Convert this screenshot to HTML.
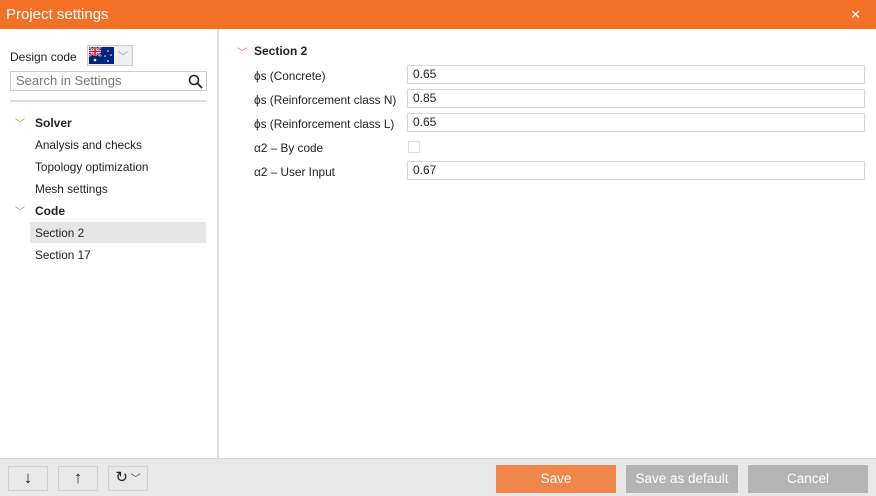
<!DOCTYPE html>
<html><head><style>
*{box-sizing:border-box;margin:0;padding:0}
body{width:876px;height:496px;overflow:hidden;background:#fff;font-family:"Liberation Sans",sans-serif;font-size:12px;color:#222;position:relative}
.title{position:absolute;left:0;top:0;width:876px;height:29px;background:#f37027;color:#fff;font-size:15px;line-height:29px;padding-left:6px}
.x{position:absolute;right:15px;top:0;color:#fff;font-size:13px}
.left{position:absolute;left:0;top:29px;width:219px;height:429px;border-right:2px solid #ddd}
.abs{position:absolute;white-space:nowrap}
.bottom{position:absolute;left:0;top:458px;width:876px;height:38px;background:#e8e8e8;border-top:1px solid #d6d6d6}
.ib{position:absolute;top:7px;height:25px;border:1px solid #cfcfcf;background:#e8e8e8;text-align:center;font-size:17px;line-height:22px}
.btn{position:absolute;top:6px;height:28px;color:#fff;font-size:13.5px;text-align:center;line-height:28px}
.inp{position:absolute;left:407px;width:458px;height:19px;border:1px solid #d8d8d8;padding-left:5px;line-height:17px}
.chev{color:#f37027;font-size:10px}
.lbl{font-size:11.8px}
</style></head><body>
<div class="title">Project settings<span class="x">✕</span></div>
<div class="left">
<div class="abs" style="left:10px;top:21px;font-size:12px">Design code</div>
<div class="abs" style="left:87px;top:16px;width:46px;height:21px;border:1px solid #ccc;background:#eee">
<svg style="position:absolute;left:1px;top:1px" width="25" height="17"><rect width="25" height="17" fill="#00247d"/><path d="M0 0L12 9M12 0L0 9" stroke="#fff" stroke-width="2"/><path d="M0 0L12 9M12 0L0 9" stroke="#cf142b" stroke-width="0.8"/><path d="M6 0V9M0 4.5H12" stroke="#fff" stroke-width="3"/><path d="M6 0V9M0 4.5H12" stroke="#cf142b" stroke-width="1.6"/><circle cx="6" cy="13" r="1.3" fill="#fff"/><circle cx="19" cy="4" r=".8" fill="#fff"/><circle cx="16" cy="9" r=".8" fill="#fff"/><circle cx="22" cy="8" r=".8" fill="#fff"/><circle cx="19" cy="14" r=".9" fill="#fff"/></svg>
<span style="position:absolute;left:30px;top:2px;color:#999;font-size:10px">﹀</span></div>
<div class="abs" style="left:10px;top:42px;width:197px;height:20px;border:1px solid #ccc;color:#777;padding-left:5px;line-height:18px;font-size:13px">Search in Settings
<svg style="position:absolute;right:3px;top:2px" width="15" height="15"><circle cx="6" cy="6" r="4.5" fill="none" stroke="#222" stroke-width="1.6"/><line x1="9.3" y1="9.3" x2="14" y2="14" stroke="#222" stroke-width="1.8"/></svg></div>
<div class="abs" style="left:10px;top:71px;width:197px;height:2px;background:#ddd"></div>
<div class="abs" style="left:15px;top:86px"><span class="chev">﹀</span></div><div class="abs" style="left:35px;top:87px;font-weight:bold">Solver</div>
<div class="abs lbl" style="left:35px;top:109px">Analysis and checks</div>
<div class="abs lbl" style="left:35px;top:131px">Topology optimization</div>
<div class="abs lbl" style="left:35px;top:153px">Mesh settings</div>
<div class="abs" style="left:15px;top:174px"><span class="chev">﹀</span></div><div class="abs" style="left:35px;top:175px;font-weight:bold">Code</div>
<div class="abs" style="left:30px;top:193px;width:176px;height:21px;background:#e6e6e6"></div>
<div class="abs lbl" style="left:35px;top:197px">Section 2</div>
<div class="abs lbl" style="left:35px;top:219px">Section 17</div>
</div>
<div class="abs" style="left:237px;top:44px"><span class="chev">﹀</span></div>
<div class="abs" style="left:254px;top:44px;font-weight:bold">Section 2</div>
<div class="abs lbl" style="left:254px;top:69px">ϕs (Concrete)</div>
<div class="abs lbl" style="left:254px;top:93px">ϕs (Reinforcement class N)</div>
<div class="abs lbl" style="left:254px;top:117px">ϕs (Reinforcement class L)</div>
<div class="abs lbl" style="left:254px;top:141px">α2 – By code</div>
<div class="abs lbl" style="left:254px;top:165px">α2 – User Input</div>
<div class="inp" style="top:65px">0.65</div>
<div class="inp" style="top:89px">0.85</div>
<div class="inp" style="top:113px">0.65</div>
<div class="abs" style="left:408px;top:141px;width:12px;height:12px;border:1px solid #ddd"></div>
<div class="inp" style="top:161px">0.67</div>
<div class="bottom">
<div class="ib" style="left:8px;width:40px">↓</div>
<div class="ib" style="left:58px;width:40px">↑</div>
<div class="ib" style="left:108px;width:40px;font-size:15px">↻<span style="font-size:10px;color:#444"> ﹀</span></div>
<div class="btn" style="left:496px;width:120px;background:#f0874a">Save</div>
<div class="btn" style="left:626px;width:112px;background:#b4b4b4">Save as default</div>
<div class="btn" style="left:748px;width:120px;background:#b4b4b4">Cancel</div>
</div>
</body></html>
